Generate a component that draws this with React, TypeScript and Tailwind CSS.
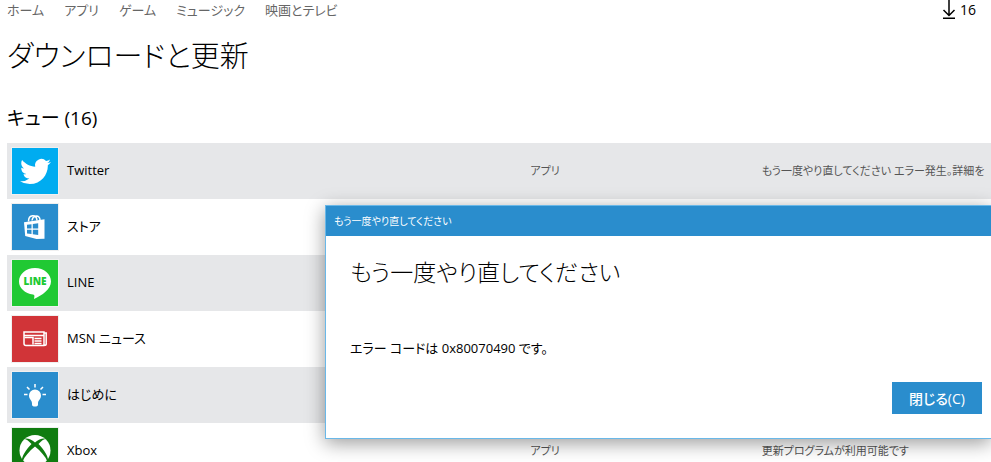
import type { ReactNode } from "react";

type QueueItem = {
  name: string;
  tile: string;
  icon: ReactNode;
  kind?: string;
  status?: string;
};

const NAV = ["ホーム", "アプリ", "ゲーム", "ミュージック", "映画とテレビ"];

function TwitterIcon() {
  return (
    <svg viewBox="0 0 24 24" className="size-[31px]" fill="#fff" aria-hidden="true">
      <path d="M23.95 4.57a10 10 0 0 1-2.82.77 4.96 4.96 0 0 0 2.16-2.72c-.95.55-2 .95-3.13 1.18a4.92 4.92 0 0 0-8.38 4.48C7.69 8.09 4.07 6.13 1.64 3.16a4.82 4.82 0 0 0-.67 2.48c0 1.71.87 3.21 2.19 4.09a4.9 4.9 0 0 1-2.23-.61v.06a4.92 4.92 0 0 0 3.95 4.83 5 5 0 0 1-2.21.08 4.94 4.94 0 0 0 4.6 3.42A9.87 9.87 0 0 1 0 19.54a13.99 13.99 0 0 0 7.55 2.21c9.05 0 14-7.5 14-13.98 0-.21 0-.42-.02-.63a9.94 9.94 0 0 0 2.46-2.55z" />
    </svg>
  );
}

function StoreIcon() {
  return (
    <svg viewBox="0 0 46 46" className="size-full" aria-hidden="true">
      <path d="M16.500 17.500c0-7.500 8-7.500 8.500-1M20 16.500c1-6 8-6 8-.5" fill="none" stroke="#fff" strokeWidth="1.500" />
      <path d="M12 18.200l20.500-3v19.500l-8 .3-11.300-3z" fill="#fff" />
      <path d="M15 20.800l4.500-.6v4.300H15zM20.800 20l5.400-.8v5.300h-5.400zM15 25.700h4.500V30l-4.500-.6zM20.800 25.700h5.400V31l-5.400-.8z" fill="#2a8dcd" />
    </svg>
  );
}

function LineIcon() {
  return (
    <svg viewBox="0 0 46 46" className="size-full" aria-hidden="true">
      <path d="M23 8C14 8 7 14 7 21.500 7 28 13 33.500 21 34.500c2 .3 1.500 2 1 4.500C30 35.500 39 29 39 21.500 39 14 32 8 23 8z" fill="#fff" />
      <text x="23" y="25" textAnchor="middle" fontSize="10" fontWeight="800" fontFamily="Open Sans, sans-serif" fill="#20c933">
        LINE
      </text>
    </svg>
  );
}

function NewsIcon() {
  return (
    <svg viewBox="0 0 46 46" className="size-full" fill="none" stroke="#fff" strokeWidth="1.500" aria-hidden="true">
      <path d="M12 16h20v13.500H14c-1.300 0-2-.7-2-2zM12 19.500h20M32 17h2.200v11c0 1-.7 1.500-2.200 1.500" />
      <path d="M12.500 21.500H21v7M22.500 22.500h7M22.500 25h7M22.500 27.500h7" />
    </svg>
  );
}

function BulbIcon() {
  return (
    <svg viewBox="0 0 46 46" className="size-full" aria-hidden="true">
      <path d="M23 17.500a6 6 0 0 0-6 6c0 4 3 4.500 3 8v1c0 1.500 1 2 3 2s3-.5 3-2v-1c0-3.500 3-4 3-8a6 6 0 0 0-6-6z" fill="#fff" />
      <path d="M23 12v3.500M15 15l2.500 2.500M31 15l-2.500 2.500M12 22.500h3.500M34 22.500h-3.500" stroke="#fff" strokeWidth="1.500" />
    </svg>
  );
}

function XboxIcon() {
  return (
    <svg viewBox="0 0 46 46" className="size-full" aria-hidden="true">
      <circle cx="23" cy="22.500" r="15.500" fill="#fff" />
      <path
        d="M11 11c4-1.500 8 .2 12 3.500C27 11.200 31 9.500 35 11c-2.500-.5-5.500 1.500-8.500 5C33 23 37 29 36 35c-2-6-7-11.500-13-16.500C17 23.500 12 29 10 35c-1-6 3-12 9.500-19-3-3.500-6-5.500-8.500-5z"
        fill="#107c10"
      />
    </svg>
  );
}

function DownloadIcon() {
  return (
    <svg viewBox="0 0 14 20" className="h-5 w-3.5" fill="none" stroke="#000" strokeWidth="1.500" aria-hidden="true">
      <path d="M7 0v15.500M1.500 10L7 15.500 12.500 10M1 18.200h12" />
    </svg>
  );
}

const QUEUE: QueueItem[] = [
  {
    name: "Twitter",
    tile: "bg-[#00acf0]",
    icon: <TwitterIcon />,
    kind: "アプリ",
    status: "もう一度やり直してください エラー発生。詳細を",
  },
  { name: "ストア", tile: "bg-[#2a8dcd]", icon: <StoreIcon /> },
  { name: "LINE", tile: "bg-[#20c933]", icon: <LineIcon /> },
  { name: "MSN ニュース", tile: "bg-[#d13438]", icon: <NewsIcon /> },
  { name: "はじめに", tile: "bg-[#2a8dcd]", icon: <BulbIcon /> },
  {
    name: "Xbox",
    tile: "bg-[#107c10]",
    icon: <XboxIcon />,
    kind: "アプリ",
    status: "更新プログラムが利用可能です",
  },
];

function QueueRow({ item }: { item: QueueItem }) {
  return (
    <tr className="h-14 odd:bg-[#e6e7e9]">
      <td className="py-0 pl-1">
        <div className="flex items-center gap-2">
          <div className={`flex size-12 shrink-0 items-center justify-center border border-[#f0f0f0] ${item.tile}`}>
            {item.icon}
          </div>
          <span>{item.name}</span>
        </div>
      </td>
      <td className="text-[11px] text-[#555]">{item.kind}</td>
      <td className="overflow-hidden text-[11px] whitespace-nowrap text-[#555]">{item.status}</td>
    </tr>
  );
}

function ErrorDialog() {
  return (
    <div
      role="dialog"
      aria-labelledby="dialog-title"
      className="absolute top-[205px] right-0 left-[325px] border-y border-l border-[#6ab8e8] bg-white shadow-[0_4px_18px_rgba(0,0,0,0.4)]"
    >
      <div className="flex h-[30px] items-center bg-[#2a8dcd] px-2 text-[10px] text-white">もう一度やり直してください</div>
      <div className="flex flex-col pt-5 pr-[9px] pb-6 pl-6">
        <h2 id="dialog-title" className="text-[23px] leading-8 font-light">
          もう一度やり直してください
        </h2>
        <p className="mt-12 text-[13px] leading-6">エラー コードは 0x80070490 です。</p>
        <button type="button" className="mt-[22px] h-8 w-[90px] self-end bg-[#2a8dcd] text-[14px] font-medium text-white">
          閉じる(C)
        </button>
      </div>
    </div>
  );
}

export default function App() {
  return (
    <div className="relative h-screen overflow-hidden bg-white font-['Open_Sans','Noto_Sans_CJK_JP',sans-serif] text-[13px] text-black [font-feature-settings:'palt']">
      <header className="flex h-5 items-center justify-between pr-[15px] pl-[7px]">
        <nav className="flex gap-5 leading-5 text-[#666]">
          {NAV.map((label) => (
            <a key={label} href="#">
              {label}
            </a>
          ))}
        </nav>
        <button type="button" className="flex items-center gap-1 text-[14px] leading-5">
          <DownloadIcon />
          16
        </button>
      </header>
      <main className="pl-[7px]">
        <h1 className="mt-4 text-[29px] leading-10 font-light">ダウンロードと更新</h1>
        <h2 className="mt-6 text-[19px] leading-9">キュー (16)</h2>
        <table className="mt-[7px] w-full table-fixed border-collapse text-left">
          <colgroup>
            <col className="w-[53.200%]" />
            <col className="w-[23.500%]" />
            <col />
          </colgroup>
          <tbody>
            {QUEUE.map((item) => (
              <QueueRow key={item.name} item={item} />
            ))}
          </tbody>
        </table>
      </main>
      <ErrorDialog />
    </div>
  );
}
